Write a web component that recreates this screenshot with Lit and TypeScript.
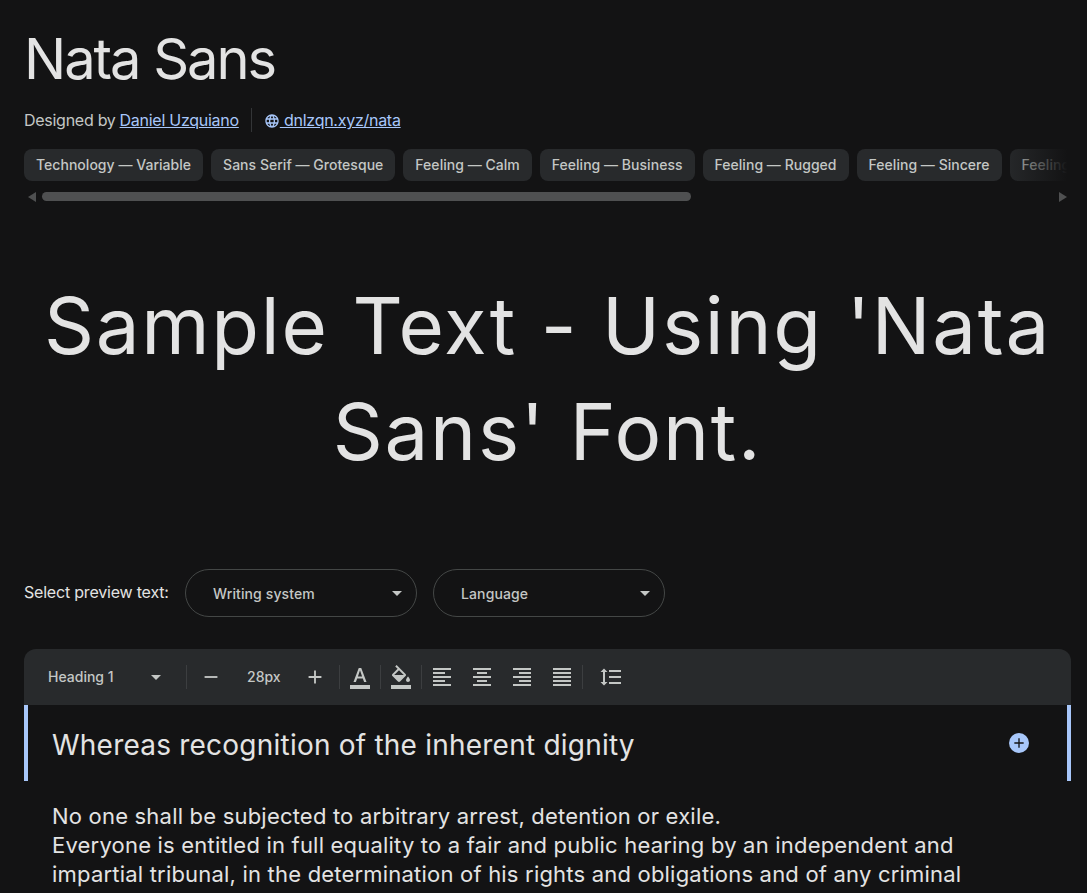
import { LitElement, html, css, svg } from "lit";
import { customElement } from "lit/decorators.js";

const P = {
  left: "M15 15H3v2h12v-2zm0-8H3v2h12V7zM3 13h18v-2H3v2zm0 8h18v-2H3v2zM3 3v2h18V3H3z",
  center: "M7 15v2h10v-2H7zm-4 6h18v-2H3v2zm0-8h18v-2H3v2zm4-6v2h10V7H7zM3 3v2h18V3H3z",
  right: "M3 21h18v-2H3v2zm6-4h12v-2H9v2zm-6-4h18v-2H3v2zm6-4h12V7H9v2zM3 3v2h18V3H3z",
  justify: "M3 21h18v-2H3v2zm0-4h18v-2H3v2zm0-4h18v-2H3v2zm0-4h18V7H3v2zm0-6v2h18V3H3z",
  spacing: "M6 7h2.5L5 3.5 1.5 7H4v10H1.5L5 20.5 8.5 17H6V7zm4-2v2h12V5H10zm0 14h12v-2H10v2zm0-6h12v-2H10v2z",
  text: "M2 20h20v4H2v-4zm3.49-3h2.42l1.27-3.58h5.65L16.09 17h2.42L13.25 3h-2.5L5.49 17zm4.42-5.61 2.03-5.79h.12l2.03 5.79H9.91z",
  fill: "M16.56 8.94L7.62 0 6.21 1.41l2.38 2.38-5.15 5.15c-.59.59-.59 1.54 0 2.12l5.5 5.5c.29.29.68.44 1.06.44s.77-.15 1.06-.44l5.5-5.5c.59-.58.59-1.53 0-2.12zM5.21 10L10 5.21 14.79 10H5.21zM19 11.5s-2 2.17-2 3.5c0 1.1.9 2 2 2s2-.9 2-2c0-1.33-2-3.5-2-3.5zM2 20h20v4H2v-4z",
  globe: "M11.99 2C6.47 2 2 6.48 2 12s4.47 10 9.99 10C17.52 22 22 17.52 22 12S17.52 2 11.99 2zm6.93 6h-2.95c-.32-1.25-.78-2.45-1.38-3.56 1.84.63 3.37 1.91 4.33 3.56zM12 4.04c.83 1.2 1.48 2.53 1.91 3.96h-3.82c.43-1.43 1.08-2.76 1.91-3.96zM4.26 14C4.1 13.36 4 12.69 4 12s.1-1.36.26-2h3.38c-.08.66-.14 1.32-.14 2 0 .68.06 1.34.14 2H4.26zm.82 2h2.95c.32 1.25.78 2.45 1.38 3.56-1.84-.63-3.37-1.9-4.33-3.56zm2.95-8H5.08c.96-1.66 2.49-2.93 4.33-3.56C8.81 5.55 8.35 6.75 8.03 8zM12 19.96c-.83-1.2-1.48-2.53-1.91-3.96h3.82c-.43 1.43-1.08 2.76-1.91 3.96zM14.34 14H9.66c-.09-.66-.16-1.32-.16-2 0-.68.07-1.35.16-2h4.68c.09.65.16 1.32.16 2 0 .68-.07 1.34-.16 2zm.25 5.56c.6-1.11 1.06-2.31 1.38-3.56h2.95c-.96 1.65-2.49 2.93-4.33 3.56zM16.36 14c.08-.66.14-1.32.14-2 0-.68-.06-1.34-.14-2h3.38c.16.64.26 1.31.26 2s-.1 1.36-.26 2h-3.38z",
  plus: "M19 13h-6v6h-2v-6H5v-2h6V5h2v6h6v2z",
  minus: "M19 13H5v-2h14v2z",
};

const icon = (d: string) => html`<svg viewBox="0 0 24 24" class="ic">${svg`<path d=${d} fill="currentColor"></path>`}</svg>`;

const chips = [
  "Technology — Variable",
  "Sans Serif — Grotesque",
  "Feeling — Calm",
  "Feeling — Business",
  "Feeling — Rugged",
  "Feeling — Sincere",
  "Feeling — Vintage",
];

@customElement("app-root")
export class AppRoot extends LitElement {
  static styles = css`
    :host {
      display: block;
      height: 893px;
      overflow: hidden;
      background: #131314;
      color: #e3e3e3;
      font-family: "Inter", "Roboto", sans-serif;
      box-sizing: border-box;
      padding: 0 16px 0 24px;
    }
    .ic { display: block; width: 100%; height: 100%; }
    h1 {
      margin: 0;
      padding-top: 22px;
      height: 74px;
      font: 400 56px/74px "Inter", sans-serif;
      letter-spacing: -2.05px;
      color: #e3e3e3;
    }
    .meta {
      display: flex;
      align-items: center;
      height: 28px;
      margin-top: 10px;
      font: 400 16px/24px "Inter", sans-serif;
      letter-spacing: -0.27px;
      color: #c4c7c5;
    }
    .meta a { color: #a8c7fa; text-decoration: underline; }
    .by a { margin-left: 4px; }
    .vr { width: 1px; height: 24px; background: #333537; margin: 0 12px; }
    .web { display: flex; align-items: center; color: #a8c7fa; }
    .web .g { width: 16px; height: 16px; margin-top: 2px; flex: none; }
    .chips-wrap { margin-top: 15px; overflow: hidden; position: relative; }
    .chips { display: flex; gap: 8px; width: 1047px; overflow: hidden; }
    .chip {
      flex: none;
      height: 32px;
      padding: 0 12px;
      border-radius: 8px;
      background: #282a2c;
      color: #c4c7c5;
      font: 500 14px/32px "Inter", sans-serif;
      letter-spacing: 0.03px;
      white-space: nowrap;
    }
    .fade {
      position: absolute;
      top: 0; right: 0;
      width: 70px; height: 32px;
      background: linear-gradient(to right, rgba(19,19,20,0), #131314 95%);
    }
    .sb { display: flex; align-items: center; height: 9px; margin-top: 11px; position: relative; }
    .arrow { width: 0; height: 0; border-style: solid; flex: none; }
    .arrow.l { border-width: 5px 8px 5px 0; border-color: transparent #4f5051 transparent transparent; margin-left: 4px; }
    .arrow.r { border-width: 5px 0 5px 8px; border-color: transparent transparent transparent #4f5051; margin-left: 368px; }
    .thumb { width: 649px; height: 9px; border-radius: 5px; background: #4f5051; margin-left: 6px; flex: none; }
    .sample {
      margin: 72px 0 0;
      height: 212px;
      font: 400 78px/106px "Inter", sans-serif;
      letter-spacing: 1.76px;
      text-align: center;
      color: #e3e3e3;
      white-space: nowrap;
    }
    .pick { display: flex; align-items: center; margin-top: 84px; height: 48px; }
    .pick-label { font: 400 16px/24px "Inter", sans-serif; letter-spacing: -0.2px; color: #e3e3e3; width: 161px; margin-top: -2px; white-space: nowrap; }
    .select {
      width: 232px; height: 48px;
      box-sizing: border-box;
      border: 1px solid #444746;
      border-radius: 24px;
      display: flex; align-items: center; justify-content: space-between;
      padding: 0 14px 0 27px;
      font: 500 14px/20px "Inter", sans-serif;
      letter-spacing: 0.12px;
      color: #c4c7c5;
      margin-right: 16px;
    }
    .select span:first-child { margin-top: 2px; }
    .caret { width: 0; height: 0; border-style: solid; border-width: 5px 5px 0 5px; border-color: #c4c7c5 transparent transparent transparent; }
    .toolbar {
      margin-top: 32px;
      height: 56px;
      background: #282a2c;
      border-radius: 12px 12px 0 0;
      display: flex; align-items: center;
      color: #c4c7c5;
      font: 500 14px/20px "Inter", sans-serif;
      padding-left: 24px;
    }
    .h1sel { width: 114px; display: flex; align-items: center; justify-content: space-between; padding-right: 1px; box-sizing: border-box; }
    .tsep { width: 1px; height: 24px; background: #3c3e40; flex: none; }
    .tb { width: 22px; height: 22px; flex: none; }
    .size { width: 32px; text-align: center; margin: 0 25px; }
    .tw { width: 24px; height: 24px; flex: none; }
    .block {
      height: 76px;
      border-left: 4px solid #a8c7fa;
      border-right: 4px solid #a8c7fa;
      display: flex; align-items: center; justify-content: space-between;
      padding: 0 38px 0 24px;
    }
    .block h2 {
      margin: 4px 0 0;
      font: 400 28px/36px "Inter", sans-serif;
      letter-spacing: 0.22px;
      color: #e3e3e3;
    }
    .add {
      width: 20px; height: 20px; border-radius: 50%;
      background: #a8c7fa; color: #131314;
      padding: 2px; box-sizing: border-box;
    }
    .body {
      margin: 21px 0 0;
      padding-left: 28px;
      width: 940px;
      font: 400 22px/29px "Inter", sans-serif;
      letter-spacing: 0.2px;
      color: #e3e3e3;
    }
  `;

  render() {
    return html`
      <h1>Nata Sans</h1>
      <div class="meta">
        <span class="by">Designed by<a href="#">Daniel Uzquiano</a></span>
        <span class="vr"></span>
        <span class="web"><span class="g">${icon(P.globe)}</span><a href="#">&nbsp;dnlzqn.xyz/nata</a></span>
      </div>
      <div class="chips-wrap">
        <div class="chips">${chips.map((c) => html`<span class="chip">${c}</span>`)}</div>
        <div class="fade"></div>
      </div>
      <div class="sb"><span class="arrow l"></span><span class="thumb"></span><span class="arrow r"></span></div>
      <div class="sample">Sample Text - Using 'Nata<br />Sans' Font.</div>
      <div class="pick">
        <span class="pick-label">Select preview text:</span>
        <div class="select"><span>Writing system</span><span class="caret"></span></div>
        <div class="select"><span>Language</span><span class="caret"></span></div>
      </div>
      <div class="toolbar">
        <div class="h1sel"><span>Heading 1</span><span class="caret"></span></div>
        <span class="tsep" style="margin-left:24px"></span>
        <span class="tb" style="margin-left:13px">${icon(P.minus)}</span>
        <span class="size">28px</span>
        <span class="tb">${icon(P.plus)}</span>
        <span class="tsep" style="margin-left:13px"></span>
        <span class="tw" style="margin-left:8px">${icon(P.text)}</span>
        <span class="tsep" style="margin-left:8px"></span>
        <span class="tw" style="margin-left:8px">${icon(P.fill)}</span>
        <span class="tsep" style="margin-left:8px"></span>
        <span class="tw" style="margin-left:8px">${icon(P.left)}</span>
        <span class="tw" style="margin-left:16px">${icon(P.center)}</span>
        <span class="tw" style="margin-left:16px">${icon(P.right)}</span>
        <span class="tw" style="margin-left:16px">${icon(P.justify)}</span>
        <span class="tsep" style="margin-left:8px"></span>
        <span class="tw" style="margin-left:16px">${icon(P.spacing)}</span>
      </div>
      <div class="block">
        <h2>Whereas recognition of the inherent dignity</h2>
        <span class="add">${icon(P.plus)}</span>
      </div>
      <div class="body">
        No one shall be subjected to arbitrary arrest, detention or exile.<br />
        Everyone is entitled in full equality to a fair and public hearing by an independent and impartial tribunal, in the determination of his rights and obligations and of any criminal charge against him.
      </div>
    `;
  }
}
